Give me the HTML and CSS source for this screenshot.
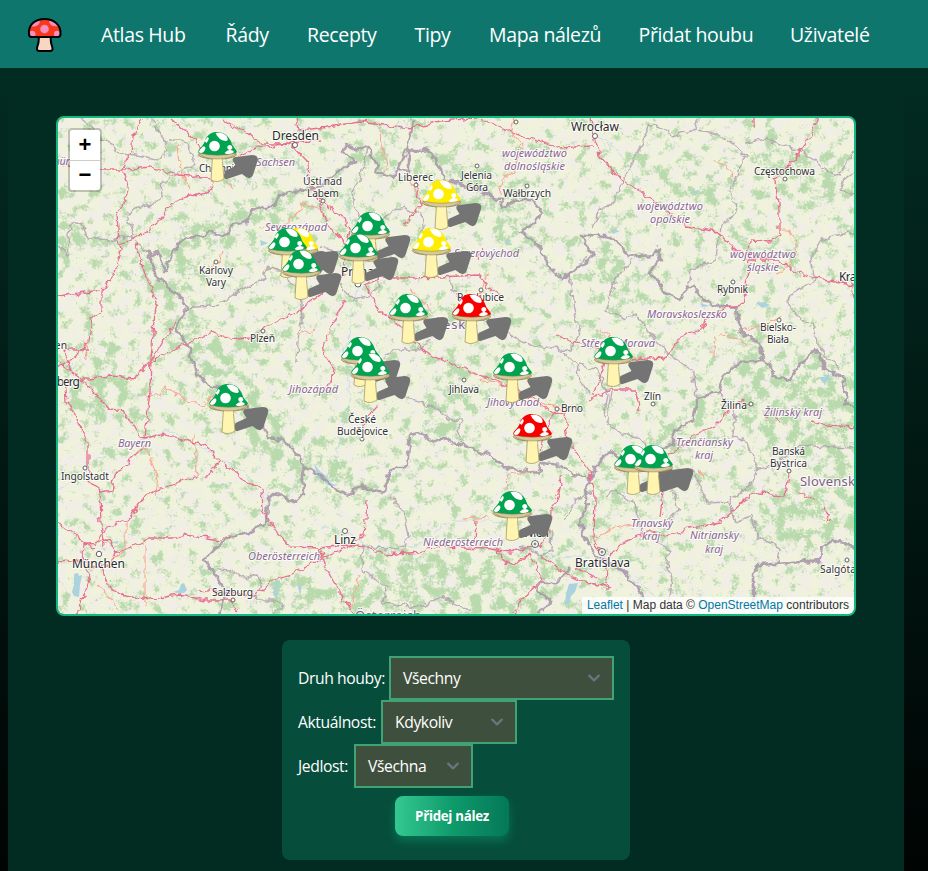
FILE: index.html
```html
<!DOCTYPE html>
<html lang="cs">
<head>
<meta charset="utf-8">
<title>Mapa nálezů</title>
<link rel="stylesheet" href="styles.css">
</head>
<body>
<header class="topbar">
  <svg class="logo" viewBox="0 0 36 36">
    <path d="M12 19 Q12 26 10 31 Q9.500 34 12.500 34 H23 Q26 34 25.500 31 Q23.500 26 23.500 19Z" fill="#f7d7c4" stroke="#000" stroke-width="2"/>
    <path d="M2 17 C1 7 9 2 17.500 2 C27 2 34 8 33.500 17 Q33.500 20 31 20 H4.500 Q2 20 2 17Z" fill="#f8381a"/>
    <g fill="#f48fc0"><circle cx="17.500" cy="12" r="4.300"/><path d="M4 9 Q8 3 13 3 Q13 8 9 9 Q6 10 4 9M22 3 Q28 4 31 9 Q27 10 24 8 Q22 6 22 3M2 15 Q7 12 8.500 16 Q9 18 7.500 20 H4 L2 18M33.500 15 Q28 12 27 16 Q26.500 18 28 20 H31 L33.500 18"/></g>
    <path d="M2 17 C1 7 9 2 17.500 2 C27 2 34 8 33.500 17 Q33.500 20 31 20 H4.500 Q2 20 2 17Z" fill="none" stroke="#000" stroke-width="2"/>
  </svg>
  <nav class="nav">
    <a>Atlas Hub</a><a>Řády</a><a>Recepty</a><a>Tipy</a><a>Mapa nálezů</a><a>Přidat houbu</a><a>Uživatelé</a>
  </nav>
</header>
<main class="page">
  <section class="map">
    <svg class="tiles" viewBox="58 118 796 496">
      <defs>
        <filter id="woods" filterUnits="userSpaceOnUse" x="58" y="118" width="796" height="496" color-interpolation-filters="sRGB">
          <feGaussianBlur in="SourceGraphic" stdDeviation="9" result="b"/>
          <feTurbulence type="fractalNoise" baseFrequency="0.085" numOctaves="6" seed="8"/>
          <feColorMatrix values="0 0 0 0 0 0 0 0 0 0 0 0 0 0 0 1 0 0 0 0" result="n"/>
          <feTurbulence type="fractalNoise" baseFrequency="0.5" numOctaves="2" seed="3"/>
          <feColorMatrix values="0 0 0 0 0 0 0 0 0 0 0 0 0 0 0 1 0 0 0 0" result="fine"/>
          <feComposite in="n" in2="fine" operator="arithmetic" k2="0.8" k3="0.3" result="nn"/>
          <feComposite in="nn" in2="b" operator="arithmetic" k2="1" k3="0.11"/>
          <feColorMatrix values="0 0 0 0 0.725 0 0 0 0 0.855 0 0 0 0 0.675 0 0 0 7 -4.200"/>
        </filter>
        <filter id="fields" filterUnits="userSpaceOnUse" x="58" y="118" width="796" height="496" color-interpolation-filters="sRGB">
          <feTurbulence type="fractalNoise" baseFrequency="0.09" numOctaves="4" seed="21"/>
          <feColorMatrix values="0 0 0 0 0.945 0 0 0 0 0.930 0 0 0 0 0.905 4 0 0 0 -1.700"/>
        </filter>
        <filter id="wiggle" filterUnits="userSpaceOnUse" x="58" y="118" width="796" height="496" color-interpolation-filters="sRGB">
          <feTurbulence type="fractalNoise" baseFrequency="0.13" numOctaves="2" seed="5"/>
          <feDisplacementMap in="SourceGraphic" scale="8" xChannelSelector="R" yChannelSelector="G"/>
        </filter>
        <g id="cap"><path d="M-19.500 20 C-18 15 -14 15 -12 7 C-9 1 -4 -.3 1 0 C8 1 12 5 14 11 C15 15 19 17 19.500 20 C14 25 -14 26 -19.500 20Z"/></g>
        <g id="parts">
          <path d="M-5 24 H4.500 L6.500 47 Q0 51.500-6.500 48Z" fill="#fff5b0" stroke="#a69a62" stroke-width=".8"/>
          <ellipse cy="22.800" rx="19" ry="4.200" fill="#dccfa0" stroke="#8c7d4c" stroke-width=".8"/>
          <path d="M-4.500 24.500 H4 L5 30 L-4.500 30Z" fill="#fff5b0"/>
        </g>
        <g id="spots" fill="#fff">
          <circle cx="-3" cy="14" r="5.300"/><path d="M-2 1 Q4-1 9 4 Q12 9 8 9 Q1 8-2 1M10 14 Q14 11 15 16 L13 18 Q9 18 10 14M-17 17 Q-13 12-12 16 Q-13 21-17 21 L-19 20M7 21 Q11 16 16 19 Q17 21 13 22 Q10 23 7 21M-10 5 Q-7 6-11 11 L-13 9"/>
        </g>
        <g id="g"><use href="#parts"/><use href="#cap" fill="#00a350"/><use href="#spots"/><use href="#rim"/></g>
        <g id="y"><use href="#parts"/><use href="#cap" fill="#ffed00"/><use href="#spots"/><use href="#rim"/></g>
        <g id="r"><use href="#parts"/><use href="#cap" fill="#f80000"/><use href="#spots"/><use href="#rim"/></g>
        <path id="rim" d="M-19 21 Q0 25.500 19 21 Q14 27 0 27 Q-14 27-19 21Z" fill="#d6c99b" stroke="#8c7d4c" stroke-width=".5"/>
        <path id="s" d="M7 39 L18 34 L15 29 Q14 25 18 25 L34 23 Q41 23 39.500 29 L35 43 Q33 48 28 45 L24 42 L9 47 Q4 48 7 39Z" fill="#747474"/>
      </defs>
      <rect x="58" y="118" width="796" height="496" fill="#f0f2dc"/>
      <rect x="58" y="118" width="796" height="496" filter="url(#fields)"/>
      <g filter="url(#woods)">
        <path d="M135 270L180 230L270 195L310 185V205L220 250L180 285L205 320L250 380L315 450L380 482L370 505L300 485L215 420L190 370ZM345 140L400 155L400 175L360 175ZM420 140L530 195L545 255L510 240L430 185ZM580 235L640 265L630 315L595 300ZM625 155L740 190L725 225L640 170ZM715 215L800 250L770 265ZM380 545L575 560L550 614H260L270 575L340 590ZM740 370L854 350V480L760 440L720 395ZM650 435L720 390L740 320L770 350L740 400L700 430L670 480ZM740 500L854 470V540L780 550ZM58 210L120 240L110 275L58 250ZM440 350L490 365L455 450L420 430ZM225 340L260 320L290 350L250 360ZM90 320L130 380L80 380ZM600 470L625 480L620 510L590 530ZM750 130L854 170V210L760 190Z"/>
        <path d="M58 370L120 350L140 410L70 430Z"/>
      </g>
      <g fill="#aad3df">
        <path d="M74 574L78 573L79 576L82 575L80 585L79 597L74 596L72 592L74 585ZM173 592L179 590L181 584L184 583L187 590L184 593L178 593ZM112 542L119 541L117 544ZM569 584L578 583L575 592L571 596L569 604L565 605L566 594ZM314 463L319 471L325 475L330 482L336 486L331 486L326 484L322 478L318 478ZM690 192L699 190L697 194ZM756 303L764 302L770 305L762 308ZM700 303L710 306L702 307ZM601 227L606 232M611 229L620 231L613 234ZM819 377L826 377L829 373L829 379L833 379L827 381L823 383ZM276 582L280 580L277 590L277 597L273 595ZM298 587L302 584L300 596ZM260 240L268 243L261 246ZM398 125L403 126L401 130ZM505 239L510 241L506 245Z"/>
        <circle cx="170" cy="155" r="2"/>
      </g>
      <g filter="url(#wiggle)">
      <g class="river">
        <path d="M600 557L625 572L648 590L680 614M320 526L345 532L367 544L383 550L420 545L450 520L490 520L525 530L550 555L590 558M58 490L110 450L170 430L205 450L225 460L260 485L267 505M285 145L295 163L325 190L345 200L353 225L365 250L360 280L350 318L345 355L350 400L335 460M640 185L618 150L595 135M658 440L666 515L668 550"/>
      </g>
      <g class="county">
        <path d="M80 118L96 130L100 140L112 144L118 153L136 156L157 160L167 150L163 138L155 128L154 118M167 140L180 140L190 146L194 165L179 170L176 175L160 184L163 195L153 205L138 207L127 217L134 235L130 240M58 245L67 257L70 225L82 222L87 238L110 240L130 236L146 250M187 308L220 305L235 293L260 281L270 267L282 270L300 295L302 315L298 340L297 362M320 247L345 252M367 148L360 178L352 192L355 205L362 220M380 220L392 212L403 208L425 217L420 240M450 275L452 290L475 310L490 325L530 345L570 350L580 333L574 310L570 275L588 255M355 270L375 276L380 286L370 295L355 300L345 292L340 282M385 355L395 350L420 350L430 340M398 395L410 398L440 410L450 420L463 420L457 430L460 440L452 445M590 395L580 380L577 365L560 350M390 497L402 510L408 535L405 548L385 550L363 545L362 570L378 580L387 588L382 603L420 607L440 597L470 610M603 419L608 395L597 370L580 365M592 228L600 208L613 205L623 182L643 140L650 125L668 130L672 137L695 130L698 118M698 130L713 133L732 143L745 155L738 175L730 190L738 212L720 226L716 260L690 270L688 290M745 143L767 139L797 150L815 160L825 171L840 175L854 150M854 172L843 180L840 190L854 195M854 232L823 238L810 260L815 280L797 290L787 302L795 315L812 325L818 345L840 370M632 260L615 280L607 310L625 318L636 315L655 340L672 357L692 370L697 397M612 384L607 422L622 433L643 440L650 458M718 392L735 413L732 435L748 443L758 470L750 488L730 498L737 523M755 470L776 465L800 445L830 447L854 448M737 523L751 515L758 537L780 548L778 564M605 497L615 490L635 505L640 530L670 550L667 567L673 580L668 603L650 612M673 490L678 510L665 525M693 470L708 503L728 502L737 523M592 492L575 500L565 520M218 569L230 570L244 578L257 574L262 580L255 600L275 600L283 607L270 614M520 545L540 555L551 552L552 530"/>
      </g>
      <g class="border">
        <path d="M147 250L152 257L158 250L162 265L166 270L172 253L183 240L210 232L227 237L232 225L247 222L252 211L263 207L273 207L280 195L300 190L320 187L337 173L345 167L356 162L343 153L347 145L360 150L367 146L375 160L377 172L392 177L397 170L409 171L409 150L420 152L424 149L433 153L437 165L443 173L443 182L453 182L470 187L487 193L492 198L501 199L503 208L517 200L533 200L542 212L533 225L520 232L537 243L550 267L563 280L577 268L588 262L594 255L585 243L582 235L590 235L610 238L623 248L627 257L653 255L658 248L661 260L648 273L660 282L663 292L677 298L683 297L687 287L693 287L700 296L712 305L737 307L740 333L760 342L762 360L740 363L723 375L718 392L698 398L693 420L673 433L673 445L643 450L625 460L610 452L595 467L590 483L585 490L588 505L580 520L585 540L600 560L620 568L637 587L643 600"/>
        <path d="M397 172L408 147L411 135L413 118M147 250L157 277L180 297L187 308L175 330L187 343L192 360L197 373L210 387L223 388L240 400L262 425L267 438L283 440L300 457L303 467L320 475L335 490L350 495L360 485L370 489L385 492L387 477L395 467L407 467L410 435L420 433L427 438L435 443L445 438L470 448L490 455L507 468L538 473L543 463L560 465L573 475L588 477M303 467L303 493L295 502L275 493L268 500L267 522L250 532L230 537L213 550L205 560L217 577L225 590L220 614M762 360L770 365L773 377L790 380L797 367L807 358L817 350L823 360L823 370L843 377L847 403L854 408M753 607L753 573L760 565L790 563L820 560L823 547L833 540L854 547M570 568L557 583L540 583L537 593L550 600L540 614"/>
      </g>
      <g class="trunk">
        <path d="M379 128L380 145L388 160L386 173M515 118L511 133L522 145L515 170L502 180L500 195M177 145L179 165L190 190M226 180L233 188M258 227L285 225L300 210L303 205L320 208M223 250L221 260L207 270M145 394L160 395L165 385L185 400L203 405L215 393M194 435L197 470L198 476M87 360L85 340M155 497L158 480L150 455L145 445M126 520L126 550L110 560M300 335L315 330M410 182L420 198L420 210M712 160L725 165L733 178M780 230L790 230L797 245L790 265L777 275M600 330L640 360M740 330L765 325L782 316M720 335L740 340L750 347M715 335L714 355M823 520L831 519M487 275L480 295L482 310M145 545L145 605M480 380L505 385L565 412M535 470L508 475L507 490M590 540L615 528L640 524M360 575L350 610M464 518L490 516M120 610L98 585M410 290L430 310M697 470L704 476"/>
      </g>
      <g class="motorway">
        <path d="M142 118L135 132L130 155L122 170L128 182L125 200L117 215L119 245L120 250L115 273L102 290L102 310L92 318L89 340L75 358L58 368M119 245L150 230L160 220L170 205L185 198L210 192L213 182L203 177L178 175L150 167L125 170L97 170M58 296L100 290M58 162L97 170M136 242L142 265L147 280L157 302L154 320L151 360L150 390L145 438M170 118L185 130L199 145L200 155M220 118L245 132L260 143L290 143L308 162L309 185L317 195L325 220L345 245M236 158L260 147L300 142L320 140M296 118L298 130L320 128L360 122L391 126L412 128L415 127M415 127L440 121L475 118M480 118L500 127L535 140L560 148L592 146M592 115L594 140L600 155L623 182L640 190L665 210L685 226L718 232L735 248M818 118L805 145L790 165L775 180L779 210L779 235L770 242L750 241L749 260L747 280L743 305L727 307L710 315L700 330L680 338L665 358L630 360L600 350L555 335M735 248L748 260L780 260L795 272L815 278L840 283L854 285M853 279L850 290L856 300M345 275L320 295L300 310L270 325L250 337L232 340L212 331L195 340L162 355L150 365M365 285L380 278L410 278L440 277L478 275L490 288L500 295M365 285L378 310L400 325L425 352L450 363L480 375L520 390L553 412L565 414L568 440L590 472M345 300L330 330L322 350L335 370L325 395M342 270L350 230L345 220L320 198M405 226L420 205L416 180M478 260L482 250M378 406L368 416L363 428M58 363L80 378L90 378L110 376L135 378L152 360L175 322M80 378L95 393L110 410L125 412L130 420L140 437L145 438L165 434L185 440L205 445L220 460L240 477L262 490L263 510L275 530L290 547L320 548L345 545L365 547L385 555L420 552L440 546L485 548L510 552L540 545M72 376L65 350L90 350M65 380L67 400L80 425L88 445L88 480L100 492L101 525L105 545M145 445L115 475L112 490L100 492M205 478L220 462M198 477L157 490L145 497L130 517L107 527L95 545M58 523L95 550M58 562L83 560L90 580L76 614M83 545L107 541L115 552L110 566L90 568L82 555ZM115 553L130 548L150 538L178 538L185 534L220 540L230 537M100 562L108 587L120 594L150 599L180 595L205 600L230 600L237 610M200 590L227 593L255 595L270 582L290 575L320 560L345 548L365 535L367 500M320 548L327 570L345 602L354 614M540 545L550 530L551 510L562 485L560 475M476 520L475 545M498 550L500 558L515 565L530 553L533 560L542 580L520 600L515 614M540 556L560 570L580 580L610 588M575 568L600 580M590 472L595 495L594 540L605 560L608 590M593 397L606 360M590 400L610 390L635 390L640 410L642 408M540 450L550 420L555 410M660 518L664 480M605 560L620 545L650 530L665 537L690 528L720 523L745 500L758 493L785 495L788 472M665 455L680 450L690 437L715 425L730 410L742 400L750 404M765 414L780 421M812 422L825 425L854 427M798 493L815 500M823 508L832 520M754 118V126"/>
      </g>
      </g>
      <g class="dots">
        <circle cx="295" cy="145" r="2.500"/><circle cx="595" cy="136" r="2.500"/><circle cx="516" cy="122" r="2"/><circle cx="216" cy="262" r="2"/><circle cx="263" cy="331" r="2"/><circle cx="416" cy="185" r="2"/><circle cx="477" cy="166" r="2"/><circle cx="527" cy="186" r="2"/><circle cx="785" cy="179" r="2"/><circle cx="733" cy="282" r="2"/><circle cx="779" cy="320" r="2"/><circle cx="323" cy="201" r="2"/><circle cx="481" cy="290" r="2"/><circle cx="464" cy="380" r="2"/><circle cx="362" cy="439" r="2"/><circle cx="557" cy="409" r="2"/><circle cx="653" cy="404" r="2"/><circle cx="751" cy="404" r="2"/><circle cx="789" cy="471" r="2"/><circle cx="85" cy="468" r="2"/><circle cx="99" cy="554" r="2.700"/><circle cx="345" cy="531" r="2.500"/><circle cx="233" cy="600" r="2"/><circle cx="847" cy="560" r="2"/><circle cx="358" cy="284" r="3"/><circle cx="535" cy="544" r="3.500"/><circle cx="602" cy="552" r="3.500"/><circle cx="535" cy="544" r="1"/><circle cx="602" cy="552" r="1"/>
      </g>
      <g class="region">
        <text x="50" y="165" textLength="20">thür</text><text x="256" y="166" textLength="39">Sachsen</text><text x="265" y="231" textLength="62">Severozápad</text><text x="454" y="257" textLength="65">Severovýchod</text><text x="502" y="157" textLength="65">województwo</text><text x="504" y="170" textLength="61">dolnośląskie</text><text x="637" y="210" textLength="66">województwo</text><text x="650" y="223" textLength="40">opolskie</text><text x="730" y="258" textLength="66">województwo</text><text x="747" y="271" textLength="32">śląskie</text><text x="647" y="318" textLength="80">Moravskoslezsko</text><text x="581" y="347" textLength="74">Střední Morava</text><text x="289" y="393" textLength="49">Jihozápad</text><text x="487" y="406" textLength="52">Jihovýchod</text><text x="118" y="447" textLength="33">Bayern</text><text x="248" y="560" textLength="72">Oberösterreich</text><text x="423" y="546" textLength="80">Niederösterreich</text><text x="764" y="416" textLength="58">Žilinský kraj</text><text x="676" y="446" textLength="57">Trenčiansky</text><text x="695" y="459" textLength="18">kraj</text><text x="631" y="527" textLength="42">Trnavský</text><text x="642" y="540" textLength="18">kraj</text><text x="690" y="539" textLength="49">Nitriansky</text><text x="705" y="553" textLength="18">kraj</text>
      </g>
      <g class="country"><text x="434" y="329" textLength="40">Česko</text><text x="800" y="486" textLength="63">Slovensko</text><text x="355" y="620" textLength="66">Österreich</text></g>
      <g class="city">
        <text x="272" y="140" textLength="47">Dresden</text><text x="571" y="131" textLength="48">Wrocław</text><text x="341" y="276" textLength="33">Praha</text><text x="839" y="281" textLength="38">Kraków</text><text x="32" y="386" textLength="48">Nürnberg</text><text x="72" y="568" textLength="53">München</text><text x="334" y="544" textLength="22">Linz</text><text x="523" y="537" textLength="26">Wien</text><text x="575" y="567" textLength="55">Bratislava</text><text x="8" y="535" textLength="51">Augsburg</text>
      </g>
      <g class="town">
        <text x="199" y="172" textLength="43">Chemnitz</text><text x="303" y="185" textLength="39">Ústí nad</text><text x="307" y="197" textLength="32">Labem</text><text x="398" y="181" textLength="35">Liberec</text><text x="461" y="179" textLength="31">Jelenia</text><text x="466" y="191" textLength="22">Góra</text><text x="503" y="197" textLength="48">Wałbrzych</text><text x="754" y="175" textLength="61">Częstochowa</text><text x="199" y="274" textLength="34">Karlovy</text><text x="206" y="286" textLength="20">Vary</text><text x="250" y="342" textLength="25">Plzeň</text><text x="457" y="301" textLength="47">Pardubice</text><text x="717" y="293" textLength="31">Rybnik</text><text x="760" y="331" textLength="36">Bielsko-</text><text x="767" y="343" textLength="22">Biała</text><text x="449" y="393" textLength="30">Jihlava</text><text x="348" y="423" textLength="28">České</text><text x="337" y="435" textLength="51">Budějovice</text><text x="561" y="412" textLength="22">Brno</text><text x="644" y="400" textLength="17">Zlín</text><text x="721" y="409" textLength="26">Žilina</text><text x="772" y="455" textLength="33">Banská</text><text x="770" y="467" textLength="37">Bystrica</text><text x="61" y="480" textLength="48">Ingolstadt</text><text x="212" y="596" textLength="41">Salzburg</text><text x="820" y="573" textLength="55">Salgótarján</text><text x="24" y="349" textLength="43">Erlangen</text>
      </g>
      <g>
        <use href="#s" x="218" y="132"/><use href="#s" x="287" y="228"/><use href="#s" x="299" y="228"/><use href="#s" x="301.500" y="250"/><use href="#s" x="441.500" y="180"/><use href="#s" x="370.500" y="212"/><use href="#s" x="358.500" y="234"/><use href="#s" x="431.500" y="228"/><use href="#s" x="408.500" y="294"/><use href="#s" x="471.500" y="294"/><use href="#s" x="360.500" y="337"/><use href="#s" x="370.500" y="353"/><use href="#s" x="512.500" y="353"/><use href="#s" x="613.500" y="337"/><use href="#s" x="228.500" y="384"/><use href="#s" x="532.500" y="414"/><use href="#s" x="512.500" y="491"/><use href="#s" x="633.500" y="445"/><use href="#s" x="653.500" y="445"/>
      </g>
      <g>
        <use href="#g" x="217.500" y="132"/><use href="#y" x="299" y="228"/><use href="#g" x="287.500" y="228"/><use href="#g" x="301.500" y="250"/><use href="#y" x="441.500" y="180"/><use href="#g" x="370.500" y="212"/><use href="#g" x="358.500" y="234"/><use href="#y" x="431.500" y="228"/><use href="#g" x="408.500" y="294"/><use href="#r" x="471.500" y="294"/><use href="#g" x="360.500" y="337"/><use href="#g" x="370.500" y="353"/><use href="#g" x="512.500" y="353"/><use href="#g" x="613.500" y="337"/><use href="#g" x="228.500" y="384"/><use href="#r" x="532.500" y="414"/><use href="#g" x="512.500" y="491"/><use href="#g" x="633.500" y="445"/><use href="#g" x="653.500" y="445"/>
      </g>
    </svg>
    <div class="zoom"><b>+</b><b>−</b></div>
    <div class="credit"><a>Leaflet</a> | Map data © <a>OpenStreetMap</a> contributors</div>
  </section>
  <section class="panel">
    <div class="row"><label class="l1">Druh houby:</label><div class="select w1"><span>Všechny</span><svg viewBox="0 0 20 20"><path d="M6 8l4 4 4-4"/></svg></div></div>
    <div class="row"><label class="l2">Aktuálnost:</label><div class="select w2"><span>Kdykoliv</span><svg viewBox="0 0 20 20"><path d="M6 8l4 4 4-4"/></svg></div></div>
    <div class="row"><label class="l3">Jedlost:</label><div class="select w3"><span>Všechna</span><svg viewBox="0 0 20 20"><path d="M6 8l4 4 4-4"/></svg></div></div>
    <button class="add">Přidej nález</button>
  </section>
</main>
</body>
</html>
```
FILE: styles.css
```css
* { box-sizing: border-box; }
body { margin: 0; height: 871px; overflow: hidden; background: linear-gradient(#022c22, #000) 0 68px no-repeat; font-family: "Segoe UI", "Open Sans", "Noto Sans", sans-serif; color: #fff; }
.topbar { height: 68px; background: #0f766e; display: flex; align-items: center; padding: 2px 0 0 27px; }
.logo { width: 36px; height: 36px; margin-right: 38px; }
.nav { display: grid; grid-template-columns: 87px 44px 70px 37px 112px 114px 80px; column-gap: 37.5px; font-size: 19.5px; letter-spacing: -0.35px; line-height: 28px; }
.nav a { white-space: nowrap; }
.page { width: 896px; height: 803px; margin-left: 8px; padding: 48px 48px 0; background: #022c22; display: flex; flex-direction: column; align-items: center; gap: 24px; }
.map { position: relative; width: 800px; height: 500px; flex: none; border: 2px solid #10b981; border-radius: 8px; overflow: hidden; }
.tiles { display: block; width: 796px; height: 496px; font-family: "Noto Sans", sans-serif; }
.tiles path { stroke-linejoin: round; }
.county { fill: none; stroke: #ac9cac; stroke-width: 1.4; opacity: .8; }
.border { fill: none; stroke: #a898a9; stroke-width: 2.6; opacity: .9; }
.river { fill: none; stroke: #aad3df; stroke-width: .8; opacity: .7; }
.motorway { fill: none; stroke: #e8708f; stroke-width: 1.3; }
.trunk { fill: none; stroke: #fba58d; stroke-width: 1.1; }
.dots circle { fill: #fff; stroke: #555; stroke-width: .9; }
.tiles text { paint-order: stroke; stroke: #fffc; stroke-width: 2px; }
.region { font-size: 11px; font-style: italic; fill: #8a6590; }
.country { font-size: 13px; fill: #815d86; }
.city { font-size: 12px; fill: #2b2b2b; }
.town { font-size: 10.3px; fill: #333; }
.zoom { position: absolute; left: 10px; top: 10px; width: 34px; height: 64px; border: 2px solid #0003; border-radius: 4px; background: #fff; background-clip: padding-box; color: #000; }
.zoom b { display: block; height: 30px; font: bold 22px/30px "Liberation Sans", sans-serif; text-align: center; }
.zoom b + b { border-top: 1px solid #ccc; line-height: 28px; }
.credit { position: absolute; right: 0; bottom: 0; height: 17px; padding: 0 5px; background: #fffc; color: #333; font: 12px/17px "Liberation Sans", sans-serif; white-space: nowrap; }
.credit a { color: #0078a8; }
.panel { width: 348px; height: 220px; padding: 16px; background: #064e3b; border-radius: 8px; }
.row { display: flex; align-items: center; height: 44px; font-size: 15.7px; letter-spacing: -0.4px; }
.row label { white-space: nowrap; }
.l1 { width: 91px; } .l2 { width: 83px; } .l3 { width: 56px; }
.select { height: 44px; border: 2px solid #3fa374; background: #3f4f3d; display: flex; align-items: center; justify-content: space-between; padding: 0 6px 0 12px; }
.select svg { width: 24px; height: 24px; fill: none; stroke: #6b7280; stroke-width: 1.9; stroke-linecap: round; stroke-linejoin: round; }
.w1 { width: 225px; } .w2 { width: 136px; } .w3 { width: 119px; }
.add { display: block; width: 114px; height: 40px; margin: 8px 0 0 97px; padding: 0; border: 0; border-radius: 8px; background: linear-gradient(90deg, #34c891, #0f9b6c 50%, #047857); box-shadow: 0 5px 10px #10b98155; color: #fff; font: bold 13.3px "Segoe UI", "Open Sans", sans-serif; letter-spacing: -0.3px; }
```
